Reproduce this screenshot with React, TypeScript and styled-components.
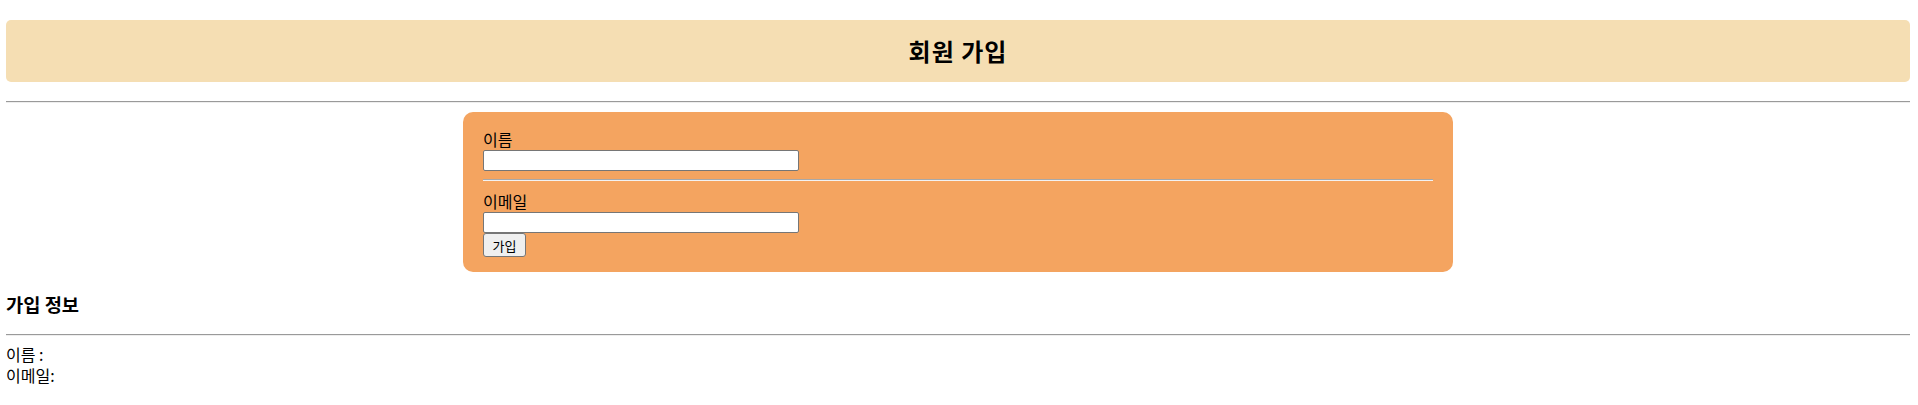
import React, { useState } from 'react'
import styled, { createGlobalStyle } from 'styled-components'

const GlobalStyle = createGlobalStyle`
  body {
    margin: 0;
    background: #fff;
    color: #000;
    font-family: "Noto Sans CJK KR", "Noto Sans", sans-serif;
    font-size: 16px;
  }
`

const Page = styled.div`
  padding: 20px 8px 0 6px;
`

const Header = styled.div`
  height: 62px;
  display: flex;
  align-items: center;
  justify-content: center;
  background: #f5deb3;
  border-radius: 5px;
`

const Title = styled.h2`
  margin: 0;
  font-size: 24px;
  font-weight: bold;
  line-height: 28px;
  letter-spacing: 1px;
`

const Divider = styled.hr<{ $top: number; $bottom: number }>`
  height: 0;
  margin: ${({ $top }) => $top}px 0 ${({ $bottom }) => $bottom}px;
  border: 0;
  border-top: 1px solid #9a9a9a;
  border-bottom: 1px solid #eeeeee;
`

const Form = styled.form`
  width: 52%;
  margin: 0 auto;
  padding: 17px 20px 15px;
  box-sizing: border-box;
  display: flex;
  flex-direction: column;
  align-items: flex-start;
  background: #f4a460;
  border-radius: 10px;
`

const Field = styled.div`
  display: flex;
  flex-direction: column;
`

const Label = styled.label`
  font-size: 16px;
  line-height: 21px;
`

const Input = styled.input`
  width: 316px;
  height: 21px;
  box-sizing: border-box;
  margin: 0;
  padding: 1px 2px;
  border: 1px solid #767676;
  border-radius: 2px;
  background: #fff;
`

const FormDivider = styled.hr`
  align-self: stretch;
  height: 0;
  margin: 8px 0 10px;
  border: 0;
  border-top: 1px solid #a8a8a8;
  border-bottom: 1px solid #f2f2f2;
`

const Button = styled.button`
  width: 43px;
  height: 24px;
  margin: 0;
  padding: 0;
  font-family: "Noto Sans CJK KR", sans-serif;
  font-size: 13px;
  color: #000;
  background: #efefef;
  border: 1px solid #767676;
  border-radius: 3px;
`

const SectionTitle = styled.h3`
  margin: 20px 0 0;
  font-size: 18.72px;
  font-weight: bold;
  line-height: 24px;
`

const InfoLine = styled.div`
  font-size: 16px;
  line-height: 21px;
`

export default function App() {
  const [name, setName] = useState('')
  const [email, setEmail] = useState('')
  const [info, setInfo] = useState({ name: '', email: '' })

  const onSubmit = (e: React.FormEvent) => {
    e.preventDefault()
    setInfo({ name, email })
  }

  return (
    <>
      <GlobalStyle />
      <Page>
        <Header>
          <Title>회원 가입</Title>
        </Header>
        <Divider $top={19} $bottom={9} />
        <Form onSubmit={onSubmit}>
          <Field>
            <Label htmlFor="name">이름</Label>
            <Input id="name" value={name} onChange={(e) => setName(e.target.value)} />
          </Field>
          <FormDivider />
          <Field>
            <Label htmlFor="email">이메일</Label>
            <Input id="email" value={email} onChange={(e) => setEmail(e.target.value)} />
          </Field>
          <Button type="submit">가입</Button>
        </Form>
        <SectionTitle>가입 정보</SectionTitle>
        <Divider $top={18} $bottom={8} />
        <InfoLine>이름 : {info.name}</InfoLine>
        <InfoLine>이메일:{info.email}</InfoLine>
      </Page>
    </>
  )
}
